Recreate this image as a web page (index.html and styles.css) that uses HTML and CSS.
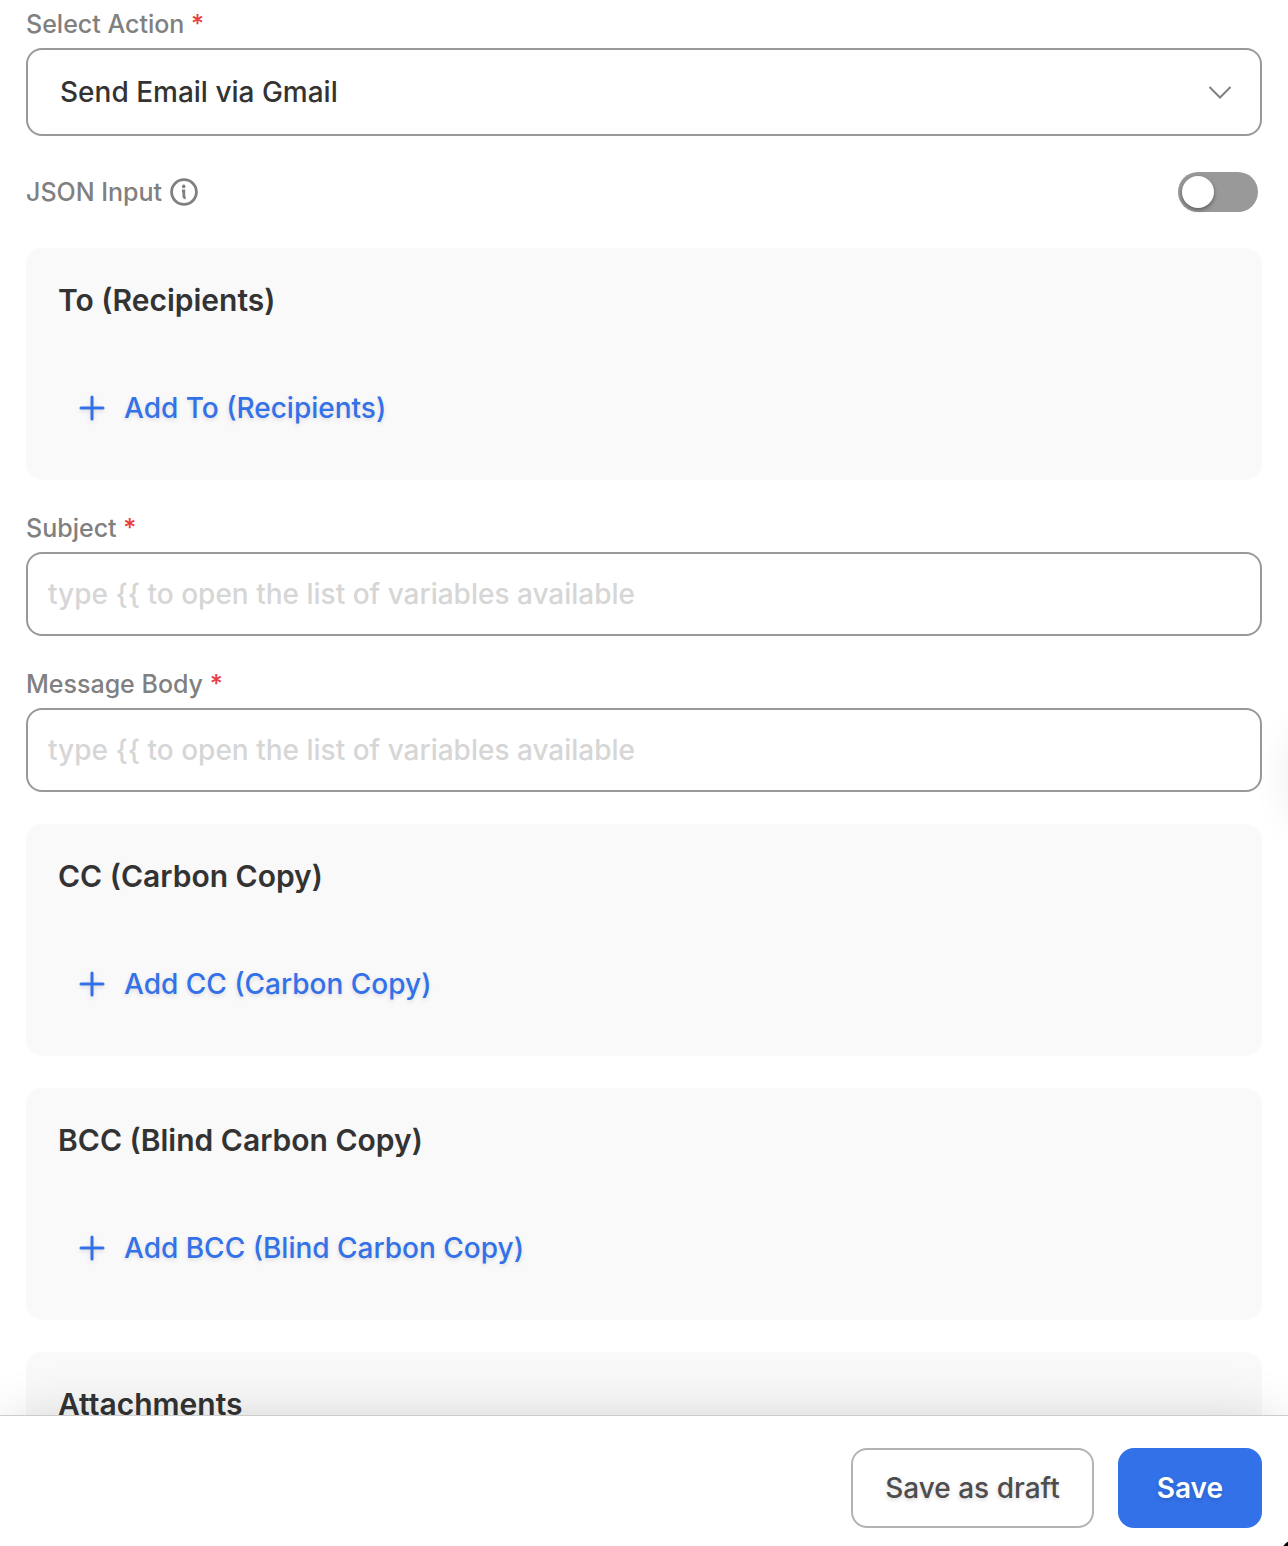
FILE: index.html
```
<!DOCTYPE html>
<html lang="en">
<head>
  <meta charset="UTF-8">
  <meta name="viewport" content="width=device-width, initial-scale=1">
  <title>Send Email via Gmail</title>
  <link rel="stylesheet" href="styles.css">
</head>
<body>
  <form class="action-form">
    <main class="fields">
      <div class="field">
        <label class="label" for="action">Select Action <span class="required">*</span></label>
        <div class="select-wrap">
          <select class="select" id="action">
            <option>Send Email via Gmail</option>
          </select>
          <svg class="chevron" viewBox="0 0 24 24" aria-hidden="true"><path d="M1.5 7 12 17.5 22.5 7"/></svg>
        </div>
      </div>

      <div class="json-row">
        <label class="label" for="json">JSON Input</label>
        <svg class="info" viewBox="0 0 28 28" aria-hidden="true">
          <circle cx="14" cy="14" r="12.4"/>
          <path d="M12 12.8h1.8v5q0 2 1.9 2"/>
          <circle class="info-dot" cx="13.7" cy="8.4" r="1.8"/>
        </svg>
        <input class="toggle" type="checkbox" id="json">
      </div>

      <section class="card">
        <h2 class="card-title">To (Recipients)</h2>
        <button class="add" type="button">
          <svg class="plus" viewBox="0 0 32 32" aria-hidden="true"><path d="M16 5v22M5 16h22"/></svg>
          Add To (Recipients)
        </button>
      </section>

      <div class="field">
        <label class="label" for="subject">Subject <span class="required">*</span></label>
        <input class="text-input" type="text" id="subject" placeholder="type {{ to open the list of variables available">
      </div>

      <div class="field">
        <label class="label" for="message">Message Body <span class="required">*</span></label>
        <input class="text-input" type="text" id="message" placeholder="type {{ to open the list of variables available">
      </div>

      <section class="card">
        <h2 class="card-title">CC (Carbon Copy)</h2>
        <button class="add" type="button">
          <svg class="plus" viewBox="0 0 32 32" aria-hidden="true"><path d="M16 5v22M5 16h22"/></svg>
          Add CC (Carbon Copy)
        </button>
      </section>

      <section class="card">
        <h2 class="card-title">BCC (Blind Carbon Copy)</h2>
        <button class="add" type="button">
          <svg class="plus" viewBox="0 0 32 32" aria-hidden="true"><path d="M16 5v22M5 16h22"/></svg>
          Add BCC (Blind Carbon Copy)
        </button>
      </section>

      <section class="card">
        <h2 class="card-title">Attachments</h2>
      </section>
    </main>

    <footer class="footer">
      <button class="btn btn-draft" type="button">Save as draft</button>
      <button class="btn btn-save" type="submit">Save</button>
    </footer>
  </form>
  <div class="side-handle"></div>
  <div class="corner-dot"></div>
</body>
</html>
```
FILE: styles.css
```
* {
  box-sizing: border-box;
}
body {
  margin: 0;
  overflow: hidden;
  background: #fff;
  color: #333;
  font-family: Inter, "Open Sans", sans-serif;
  font-size: 28px;
  font-weight: 500;
}
input, select, button {
  font: inherit;
}
.action-form {
  display: flex;
  flex-direction: column;
  height: 100vh;
}
.fields {
  flex: 1;
  min-height: 0;
  display: flex;
  flex-direction: column;
  gap: 32px;
  padding: 8px 26px 32px;
  overflow-y: auto;
  scrollbar-width: none;
}
.field {
  display: flex;
  flex-direction: column;
  flex-shrink: 0;
  gap: 8px;
}
.label {
  color: #808080;
  font-size: 25px;
  line-height: 32px;
}
.required {
  color: #ea3d3d;
}

/* select */
.select-wrap {
  display: grid;
  align-items: center;
}
.select,
.chevron {
  grid-area: 1 / 1;
}
.select {
  appearance: none;
  width: 100%;
  height: 88px;
  padding: 0 32px;
  border: 2px solid #999;
  border-radius: 16px;
  background: #fff;
  color: #333;
}
.chevron {
  justify-self: end;
  width: 24px;
  height: 24px;
  margin-right: 30px;
  fill: none;
  stroke: #808080;
  stroke-width: 2;
  pointer-events: none;
}

/* json toggle */
.json-row {
  display: flex;
  align-items: center;
  flex-shrink: 0;
  gap: 8px;
  height: 48px;
  padding-right: 4px;
}
.info {
  width: 28px;
  height: 28px;
  fill: none;
  stroke: #808080;
  stroke-width: 2.8;
}
.info-dot {
  fill: #808080;
  stroke: none;
}
.toggle {
  appearance: none;
  display: flex;
  width: 80px;
  height: 40px;
  margin: 0 0 0 auto;
  padding: 4px;
  border-radius: 20px;
  background: #999;
  cursor: pointer;
}
.toggle::before {
  content: "";
  width: 32px;
  height: 32px;
  border-radius: 50%;
  background: #fff;
  box-shadow: 0 2px 4px rgba(0, 0, 0, 0.4);
}
.toggle:checked {
  justify-content: flex-end;
  background: #3371e8;
}

/* cards */
.card {
  display: flex;
  flex-direction: column;
  align-items: flex-start;
  flex-shrink: 0;
  gap: 48px;
  padding: 32px;
  border-radius: 16px;
  background: #f9f9f9;
}
.card-title {
  margin: 0;
  font-size: 30px;
  font-weight: 600;
  line-height: 40px;
}
.add {
  display: flex;
  align-items: center;
  gap: 16px;
  height: 80px;
  padding: 0 18px;
  border: none;
  background: none;
  color: #3371e8;
  text-shadow: 0 2px 4px rgba(0, 0, 0, 0.12);
  cursor: pointer;
}
.plus {
  width: 32px;
  height: 32px;
  fill: none;
  stroke: #3371e8;
  stroke-width: 3;
  stroke-linecap: round;
  filter: drop-shadow(0 2px 2px rgba(0, 0, 0, 0.12));
}

.text-input {
  width: 100%;
  height: 84px;
  padding: 0 20px;
  border: 2px solid #999;
  border-radius: 16px;
  background: #fff;
  color: #333;
}
.text-input::placeholder {
  color: #d6d6d6;
  opacity: 1;
}

/* footer */
.footer {
  position: relative;
  display: flex;
  justify-content: flex-end;
  gap: 24px;
  padding: 32px 26px 18px;
  border-top: 1px solid #ccc;
  background: #fff;
  box-shadow: 0 0 60px -10px rgba(0, 0, 0, 0.2);
}
.btn {
  height: 80px;
  border-radius: 16px;
  text-shadow: 0 2px 4px rgba(0, 0, 0, 0.15);
  cursor: pointer;
}
.btn-draft {
  padding: 0 32px;
  border: 2px solid #b3b3b3;
  background: #fff;
  color: #4d4d4d;
}
.btn-save {
  padding: 0 39px;
  border: none;
  background: #3371e8;
  color: #fff;
  font-weight: 600;
}

/* handle that sits just past the right edge */
.side-handle {
  position: absolute;
  top: 730px;
  right: -49px;
  width: 48px;
  height: 96px;
  border-radius: 40px;
  box-shadow: 0 0 40px rgba(0, 0, 0, 0.07);
}
.corner-dot {
  position: absolute;
  right: -18px;
  bottom: -18px;
  width: 24px;
  height: 24px;
  border-radius: 50%;
  background: #000;
}
```
